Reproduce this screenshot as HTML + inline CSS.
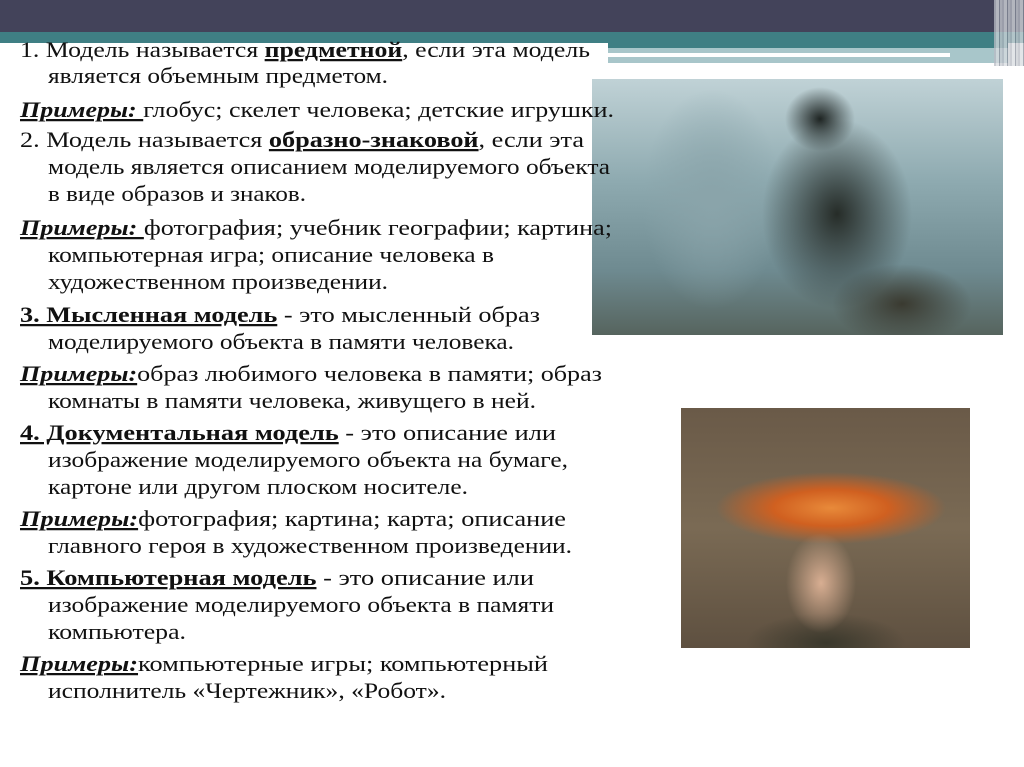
<!DOCTYPE html>
<html><head><meta charset="utf-8"><style>
html,body{margin:0;padding:0;background:#fff;width:1024px;height:767px;overflow:hidden;position:relative}
.a{position:absolute}
svg text{font-family:"Liberation Serif",serif;font-size:22.5px;fill:#111}
.b{font-weight:bold;text-decoration:underline}
.bi{font-weight:bold;font-style:italic;text-decoration:underline}
</style></head><body>
<div class="a" style="left:0;top:0;width:1024px;height:32px;background:#43435a"></div>
<div class="a" style="left:0;top:32px;width:1024px;height:11px;background:#3f7f84"></div>
<div class="a" style="left:608px;top:43px;width:400px;height:5px;background:#3f7f84"></div>
<div class="a" style="left:608px;top:48px;width:400px;height:15px;background:#a8c6ca"></div>
<div class="a" style="left:608px;top:53px;width:342px;height:4px;background:#fff"></div>
<div class="a" style="left:994px;top:0;width:30px;height:66px;background:repeating-linear-gradient(90deg,#b8bcc4 0 2px,#d8dce0 2px 5px,#8a909c 5px 6px,#c8ccd2 6px 8px);opacity:.75"></div>

<div class="a" style="left:592px;top:79px;width:411px;height:256px;background:
radial-gradient(ellipse 75px 95px at 245px 135px,#262c28,transparent),
radial-gradient(ellipse 35px 32px at 228px 40px,#1e2422,transparent),
radial-gradient(ellipse 70px 40px at 310px 225px,#3a3a30,transparent),
radial-gradient(ellipse 70px 110px at 120px 120px,#8aa4aa,transparent),
linear-gradient(180deg,#c0d2d6 0%,#8eaab0 40%,#6e8a90 75%,#56645e 100%)"></div>

<div class="a" style="left:681px;top:408px;width:289px;height:240px;background:
radial-gradient(ellipse 35px 50px at 140px 175px,#d8ae92,transparent),
radial-gradient(ellipse 80px 30px at 145px 235px,#3a382c,transparent),
radial-gradient(ellipse 115px 36px at 150px 100px,#e88a3a,#d06020 50%,transparent),
linear-gradient(180deg,#6a5a48,#7a6a54 50%,#5e5040)"></div>

<svg class="a" style="left:0;top:0" width="1024" height="767">
<text x="20" y="57" textLength="570" lengthAdjust="spacingAndGlyphs">1. Модель называется <tspan class="b">предметной</tspan>, если эта модель</text>
<text x="48" y="83" textLength="340" lengthAdjust="spacingAndGlyphs">является объемным предметом.</text>
<text x="20" y="117" textLength="594" lengthAdjust="spacingAndGlyphs"><tspan class="bi">Примеры: </tspan>глобус; скелет человека;  детские игрушки.</text>
<text x="20" y="147" textLength="564" lengthAdjust="spacingAndGlyphs">2. Модель называется <tspan class="b">образно-знаковой</tspan>, если эта</text>
<text x="48" y="174" textLength="562" lengthAdjust="spacingAndGlyphs">модель является описанием моделируемого объекта</text>
<text x="48" y="201" textLength="258" lengthAdjust="spacingAndGlyphs">в виде образов и знаков.</text>
<text x="20" y="235" textLength="592" lengthAdjust="spacingAndGlyphs"><tspan class="bi">Примеры: </tspan>фотография; учебник географии; картина;</text>
<text x="48" y="262" textLength="446" lengthAdjust="spacingAndGlyphs">компьютерная игра; описание человека в</text>
<text x="48" y="289" textLength="340" lengthAdjust="spacingAndGlyphs">художественном произведении.</text>
<text x="20" y="322" textLength="520" lengthAdjust="spacingAndGlyphs"><tspan class="b">3. Мысленная модель</tspan> - это мысленный образ</text>
<text x="48" y="349" textLength="466" lengthAdjust="spacingAndGlyphs">моделируемого объекта в памяти человека.</text>
<text x="20" y="381" textLength="582" lengthAdjust="spacingAndGlyphs"><tspan class="bi">Примеры:</tspan>образ любимого человека в памяти; образ</text>
<text x="48" y="408" textLength="488" lengthAdjust="spacingAndGlyphs">комнаты в памяти человека, живущего в ней.</text>
<text x="20" y="440" textLength="536" lengthAdjust="spacingAndGlyphs"><tspan class="b">4. Документальная модель</tspan> - это описание или</text>
<text x="48" y="467" textLength="520" lengthAdjust="spacingAndGlyphs">изображение моделируемого объекта на бумаге,</text>
<text x="48" y="494" textLength="420" lengthAdjust="spacingAndGlyphs">картоне или другом плоском носителе.</text>
<text x="20" y="526" textLength="546" lengthAdjust="spacingAndGlyphs"><tspan class="bi">Примеры:</tspan>фотография; картина; карта; описание</text>
<text x="48" y="553" textLength="524" lengthAdjust="spacingAndGlyphs">главного героя в художественном произведении.</text>
<text x="20" y="585" textLength="514" lengthAdjust="spacingAndGlyphs"><tspan class="b">5. Компьютерная модель</tspan> - это описание или</text>
<text x="48" y="612" textLength="506" lengthAdjust="spacingAndGlyphs">изображение моделируемого объекта в памяти</text>
<text x="48" y="639" textLength="138" lengthAdjust="spacingAndGlyphs">компьютера.</text>
<text x="20" y="671" textLength="528" lengthAdjust="spacingAndGlyphs"><tspan class="bi">Примеры:</tspan>компьютерные игры; компьютерный</text>
<text x="48" y="698" textLength="398" lengthAdjust="spacingAndGlyphs">исполнитель «Чертежник», «Робот».</text>
</svg>
</body></html>
